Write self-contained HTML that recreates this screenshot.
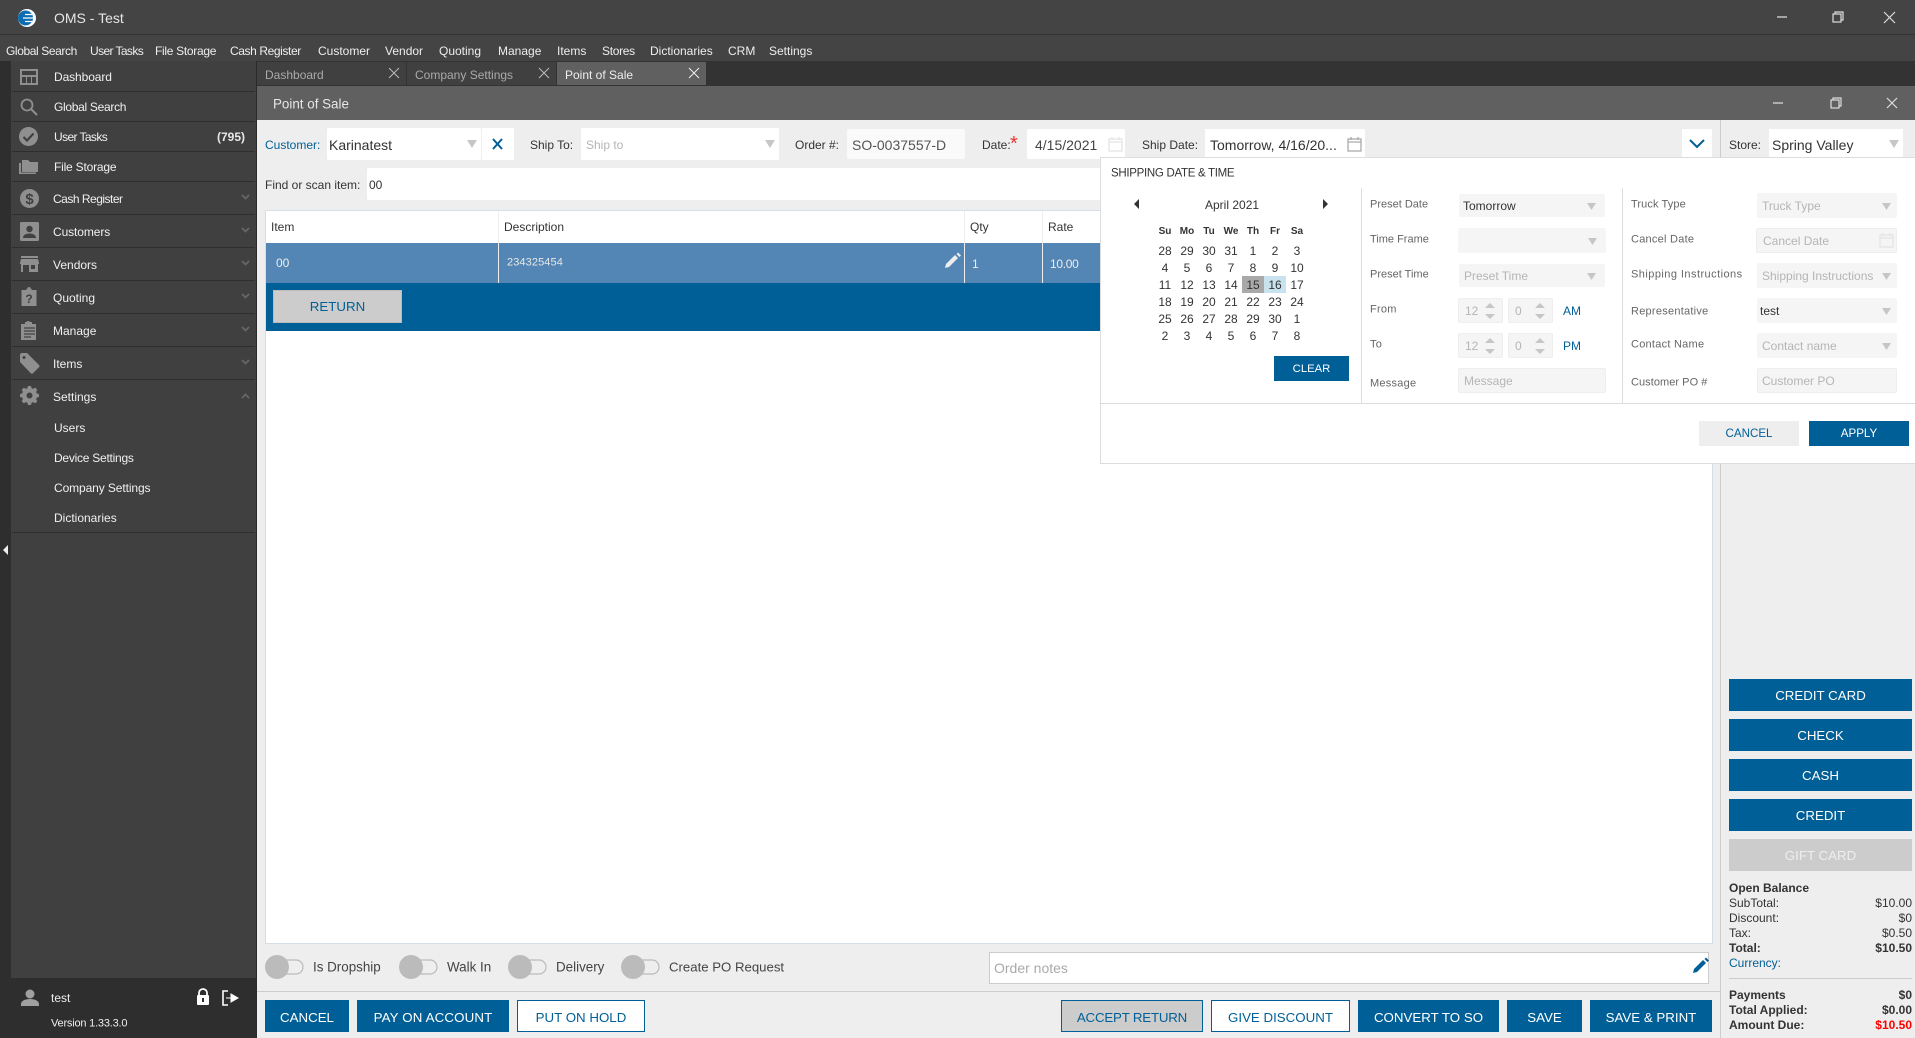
<!DOCTYPE html>
<html lang="en"><head><meta charset="utf-8"><title>OMS - Test</title>
<style>
html,body{margin:0;padding:0;width:1915px;height:1038px;overflow:hidden;background:#eee;font-family:"Liberation Sans",sans-serif}
.b{position:absolute;box-sizing:border-box}
.t{position:absolute;transform:translateY(-50%);white-space:nowrap;line-height:1}
.m{font-size:12px;color:#eee;top:51px}
.s{font-size:12px;color:#f0f0f0;left:54px}
.sx{font-size:12px;color:#f0f0f0;left:53px}
.l{font-size:12px;color:#333}
.g{font-size:11px;color:#666;letter-spacing:.25px}
.f{background:#f5f5f5;border-radius:2px}
.ph{font-size:12px;color:#b5b5b5}
.btn{position:absolute;box-sizing:border-box;display:flex;align-items:center;justify-content:center;font-size:13.3px;color:#fff;background:#005f96;white-space:nowrap}
.low{padding-top:2px}
.alt{background:#fff;color:#005f96;border:1px solid #005f96}
.d{position:absolute;width:22px;height:17px;line-height:19px;text-align:center;font-size:12px;color:#333}
.h{font-weight:bold;font-size:10px;color:#333;line-height:17px}
.r{position:absolute;left:1729px;width:183px;transform:translateY(-50%);font-size:12px;color:#333;display:flex;justify-content:space-between;line-height:1}
.sep{position:absolute;left:12px;width:243px;height:1px;background:#2e2e2e}
</style></head><body>

<!-- app chrome -->
<div class="b" style="left:0;top:0;width:1915px;height:34px;background:#444"></div>
<div class="b" style="left:0;top:34px;width:1915px;height:1px;background:#333"></div>
<div class="b" style="left:0;top:35px;width:1915px;height:26px;background:#444"></div>
<div class="b" style="left:0;top:61px;width:1915px;height:25px;background:#333"></div>
<span class="t" style="left:54px;top:18px;font-size:14px;color:#e6e6e6">OMS - Test</span>
<span class="t m" style="left:6px;letter-spacing:-.4px">Global Search</span>
<span class="t m" style="left:90px;letter-spacing:-.6px">User Tasks</span>
<span class="t m" style="left:155px;letter-spacing:-.3px">File Storage</span>
<span class="t m" style="left:230px;letter-spacing:-.4px">Cash Register</span>
<span class="t m" style="left:318px">Customer</span>
<span class="t m" style="left:385px">Vendor</span>
<span class="t m" style="left:439px">Quoting</span>
<span class="t m" style="left:498px">Manage</span>
<span class="t m" style="left:557px">Items</span>
<span class="t m" style="left:602px;letter-spacing:-.3px">Stores</span>
<span class="t m" style="left:650px">Dictionaries</span>
<span class="t m" style="left:728px">CRM</span>
<span class="t m" style="left:769px">Settings</span>

<!-- sidebar -->
<div class="b" style="left:0;top:61px;width:11px;height:977px;background:#2e2e2e"></div>
<div class="b" style="left:11px;top:61px;width:246px;height:917px;background:#404040"></div>
<div class="b" style="left:0;top:978px;width:257px;height:60px;background:#2e2e2e"></div>
<div class="b" style="left:256px;top:61px;width:1px;height:977px;background:#2a2a2a"></div>
<div class="sep" style="top:91px"></div><div class="sep" style="top:121px"></div><div class="sep" style="top:151px"></div><div class="sep" style="top:181px"></div><div class="sep" style="top:214px"></div><div class="sep" style="top:247px"></div><div class="sep" style="top:280px"></div><div class="sep" style="top:313px"></div><div class="sep" style="top:346px"></div><div class="sep" style="top:379px"></div><div class="sep" style="top:532px"></div>
<span class="t s" style="top:77px;letter-spacing:-.1px">Dashboard</span>
<span class="t s" style="top:107px;letter-spacing:-.3px">Global Search</span>
<span class="t s" style="top:137px;letter-spacing:-.6px">User Tasks</span>
<span class="t" style="left:217px;top:137px;font-size:12px;font-weight:bold;color:#e8e8e8">(795)</span>
<span class="t s" style="top:167px;letter-spacing:-.2px">File Storage</span>
<span class="t sx" style="top:199px;letter-spacing:-.5px">Cash Register</span>
<span class="t sx" style="top:232px;letter-spacing:-.1px">Customers</span>
<span class="t sx" style="top:265px">Vendors</span>
<span class="t sx" style="top:298px">Quoting</span>
<span class="t sx" style="top:331px">Manage</span>
<span class="t sx" style="top:364px">Items</span>
<span class="t sx" style="top:397px">Settings</span>
<span class="t s" style="top:428px">Users</span>
<span class="t s" style="top:458px;letter-spacing:-.25px">Device Settings</span>
<span class="t s" style="top:488px;letter-spacing:-.1px">Company Settings</span>
<span class="t s" style="top:518px">Dictionaries</span>
<span class="t" style="left:51px;top:998px;font-size:12px;color:#eee">test</span>
<span class="t" style="left:51px;top:1024px;font-size:11px;color:#eee;letter-spacing:-.2px">Version 1.33.3.0</span>

<!-- tabs -->
<div class="b" style="left:257px;top:62px;width:149px;height:23px;background:#404040"></div>
<div class="b" style="left:407px;top:62px;width:149px;height:23px;background:#404040"></div>
<div class="b" style="left:557px;top:62px;width:149px;height:23px;background:#606060"></div>
<span class="t" style="left:265px;top:75px;font-size:12px;color:#aaa">Dashboard</span>
<span class="t" style="left:415px;top:75px;font-size:12px;color:#aaa">Company Settings</span>
<span class="t" style="left:565px;top:75px;font-size:12px;color:#eee">Point of Sale</span>

<!-- window -->
<div class="b" style="left:257px;top:86px;width:1658px;height:34px;background:#606060"></div>
<span class="t" style="left:273px;top:104px;font-size:13.4px;color:#e8e8e8">Point of Sale</span>
<div class="b" style="left:257px;top:120px;width:1658px;height:918px;background:#eee"></div>

<!-- toolbar -->
<span class="t l" style="left:265px;top:145px;color:#005f96">Customer:</span>
<div class="b" style="left:327px;top:128px;width:154px;height:32px;background:#fff;border-radius:2px"></div>
<span class="t" style="left:329px;top:145px;font-size:14px;color:#333">Karinatest</span>
<div class="b" style="left:482px;top:128px;width:32px;height:32px;background:#fff"></div>
<span class="t l" style="left:530px;top:145px">Ship To:</span>
<div class="b" style="left:581px;top:128px;width:198px;height:32px;background:#fff;border-radius:2px"></div>
<span class="t ph" style="left:586px;top:145px">Ship to</span>
<span class="t l" style="left:795px;top:145px">Order #:</span>
<div class="b" style="left:847px;top:129px;width:118px;height:30px;background:#fafafa;border-radius:2px"></div>
<span class="t" style="left:852px;top:145px;font-size:14px;color:#555">SO-0037557-D</span>
<span class="t l" style="left:982px;top:145px">Date:</span>
<span class="t" style="left:1010px;top:144px;font-size:20px;color:#e33">*</span>
<div class="b" style="left:1027px;top:129px;width:98px;height:30px;background:#fff;border-radius:2px"></div>
<span class="t" style="left:1035px;top:145px;font-size:14px;color:#444">4/15/2021</span>
<span class="t l" style="left:1142px;top:145px">Ship Date:</span>
<div class="b" style="left:1205px;top:129px;width:160px;height:30px;background:#fff"></div>
<span class="t" style="left:1210px;top:145px;font-size:14px;color:#333">Tomorrow, 4/16/20...</span>
<div class="b" style="left:1682px;top:129px;width:30px;height:28px;background:#fff"></div>
<div class="b" style="left:1720px;top:120px;width:1px;height:918px;background:#ccc"></div>
<span class="t l" style="left:1729px;top:145px">Store:</span>
<div class="b" style="left:1769px;top:129px;width:134px;height:28px;background:#fff"></div>
<span class="t" style="left:1772px;top:145px;font-size:14px;color:#333">Spring Valley</span>

<span class="t l" style="left:265px;top:185px">Find or scan item:</span>
<div class="b" style="left:367px;top:168px;width:1345px;height:32px;background:#fff;border-radius:2px 0 0 2px"></div>
<span class="t" style="left:369px;top:185px;font-size:12px;color:#333">00</span>

<!-- table -->
<div class="b" style="left:265px;top:210px;width:1448px;height:734px;background:#fff;border:1px solid #d5dfe9"></div>
<span class="t l" style="left:271px;top:227px">Item</span>
<span class="t l" style="left:504px;top:227px">Description</span>
<span class="t l" style="left:970px;top:227px">Qty</span>
<span class="t l" style="left:1048px;top:227px">Rate</span>
<div class="b" style="left:266px;top:243px;width:1446px;height:40px;background:#5486b5"></div>
<div class="b" style="left:498px;top:211px;width:1px;height:72px;background:#eee"></div>
<div class="b" style="left:964px;top:211px;width:1px;height:72px;background:#eee"></div>
<div class="b" style="left:1042px;top:211px;width:1px;height:72px;background:#eee"></div>
<span class="t" style="left:276px;top:263px;font-size:12px;color:#eee">00</span>
<span class="t" style="left:507px;top:263px;font-size:11px;color:#e6e6e6;letter-spacing:.1px">234325454</span>
<span class="t" style="left:972px;top:264px;font-size:12px;color:#eee">1</span>
<span class="t" style="left:1050px;top:264px;font-size:12px;color:#eee;letter-spacing:-.3px">10.00</span>
<div class="b" style="left:266px;top:283px;width:1446px;height:48px;background:#005f96"></div>
<div class="btn" style="left:273px;top:290px;width:129px;height:33px;background:#ccc;color:#005f96;border:1px solid #bbb">RETURN</div>

<!-- popup -->
<div class="b" style="left:1100px;top:157px;width:815px;height:307px;background:#fff;border:1px solid #ddd;border-right:0"></div>
<div class="b" style="left:1101px;top:403px;width:814px;height:1px;background:#ddd"></div>
<div class="b" style="left:1361px;top:188px;width:1px;height:215px;background:#ddd"></div>
<div class="b" style="left:1622px;top:188px;width:1px;height:215px;background:#ddd"></div>
<span class="t" style="left:1111px;top:174px;font-size:11.5px;color:#333;letter-spacing:-.3px">SHIPPING DATE &amp; TIME</span>
<span class="t" style="left:1205px;top:205px;font-size:12px;color:#333">April 2021</span>

<div class="d h" style="left:1154px;top:223px">Su</div><div class="d h" style="left:1176px;top:223px">Mo</div><div class="d h" style="left:1198px;top:223px">Tu</div><div class="d h" style="left:1220px;top:223px">We</div><div class="d h" style="left:1242px;top:223px">Th</div><div class="d h" style="left:1264px;top:223px">Fr</div><div class="d h" style="left:1286px;top:223px">Sa</div>

<div class="d" style="left:1154px;top:242px">28</div><div class="d" style="left:1176px;top:242px">29</div><div class="d" style="left:1198px;top:242px">30</div><div class="d" style="left:1220px;top:242px">31</div><div class="d" style="left:1242px;top:242px">1</div><div class="d" style="left:1264px;top:242px">2</div><div class="d" style="left:1286px;top:242px">3</div>
<div class="d" style="left:1154px;top:259px">4</div><div class="d" style="left:1176px;top:259px">5</div><div class="d" style="left:1198px;top:259px">6</div><div class="d" style="left:1220px;top:259px">7</div><div class="d" style="left:1242px;top:259px">8</div><div class="d" style="left:1264px;top:259px">9</div><div class="d" style="left:1286px;top:259px">10</div>
<div class="d" style="left:1154px;top:276px">11</div><div class="d" style="left:1176px;top:276px">12</div><div class="d" style="left:1198px;top:276px">13</div><div class="d" style="left:1220px;top:276px">14</div><div class="d" style="left:1242px;top:276px;background:#a9a9a9">15</div><div class="d" style="left:1264px;top:276px;background:#c8e3ee">16</div><div class="d" style="left:1286px;top:276px">17</div>
<div class="d" style="left:1154px;top:293px">18</div><div class="d" style="left:1176px;top:293px">19</div><div class="d" style="left:1198px;top:293px">20</div><div class="d" style="left:1220px;top:293px">21</div><div class="d" style="left:1242px;top:293px">22</div><div class="d" style="left:1264px;top:293px">23</div><div class="d" style="left:1286px;top:293px">24</div>
<div class="d" style="left:1154px;top:310px">25</div><div class="d" style="left:1176px;top:310px">26</div><div class="d" style="left:1198px;top:310px">27</div><div class="d" style="left:1220px;top:310px">28</div><div class="d" style="left:1242px;top:310px">29</div><div class="d" style="left:1264px;top:310px">30</div><div class="d" style="left:1286px;top:310px">1</div>
<div class="d" style="left:1154px;top:327px">2</div><div class="d" style="left:1176px;top:327px">3</div><div class="d" style="left:1198px;top:327px">4</div><div class="d" style="left:1220px;top:327px">5</div><div class="d" style="left:1242px;top:327px">6</div><div class="d" style="left:1264px;top:327px">7</div><div class="d" style="left:1286px;top:327px">8</div>
<div class="btn" style="left:1274px;top:356px;width:75px;height:25px;font-size:11.3px">CLEAR</div>

<span class="t g" style="left:1370px;top:205px;letter-spacing:0">Preset Date</span>
<span class="t g" style="left:1370px;top:240px;letter-spacing:0">Time Frame</span>
<span class="t g" style="left:1370px;top:275px;letter-spacing:0">Preset Time</span>
<span class="t g" style="left:1370px;top:310px">From</span>
<span class="t g" style="left:1370px;top:345px">To</span>
<span class="t g" style="left:1370px;top:384px">Message</span>
<div class="b f" style="left:1459px;top:194px;width:146px;height:23px"></div>
<span class="t" style="left:1463px;top:206px;font-size:12px;color:#333">Tomorrow</span>
<div class="b f" style="left:1458px;top:228px;width:148px;height:25px"></div>
<div class="b f" style="left:1459px;top:264px;width:146px;height:23px"></div>
<span class="t ph" style="left:1464px;top:276px">Preset Time</span>
<div class="b f" style="left:1458px;top:298px;width:45px;height:25px;border:1px solid #eee"></div>
<div class="b f" style="left:1508px;top:298px;width:45px;height:25px;border:1px solid #eee"></div>
<div class="b f" style="left:1458px;top:333px;width:45px;height:25px;border:1px solid #eee"></div>
<div class="b f" style="left:1508px;top:333px;width:45px;height:25px;border:1px solid #eee"></div>
<span class="t ph" style="left:1465px;top:311px">12</span><span class="t ph" style="left:1515px;top:311px">0</span>
<span class="t ph" style="left:1465px;top:346px">12</span><span class="t ph" style="left:1515px;top:346px">0</span>
<span class="t" style="left:1563px;top:311px;font-size:12px;color:#005f96">AM</span>
<span class="t" style="left:1563px;top:346px;font-size:12px;color:#005f96">PM</span>
<div class="b f" style="left:1458px;top:368px;width:148px;height:25px;border:1px solid #eee"></div>
<span class="t ph" style="left:1464px;top:381px">Message</span>

<span class="t g" style="left:1631px;top:205px;letter-spacing:.1px">Truck Type</span>
<span class="t g" style="left:1631px;top:240px">Cancel Date</span>
<span class="t g" style="left:1631px;top:275px;letter-spacing:.45px">Shipping Instructions</span>
<span class="t g" style="left:1631px;top:312px">Representative</span>
<span class="t g" style="left:1631px;top:345px">Contact Name</span>
<span class="t g" style="left:1631px;top:383px;letter-spacing:.05px">Customer PO #</span>
<div class="b f" style="left:1757px;top:193px;width:140px;height:25px"></div>
<span class="t ph" style="left:1762px;top:206px">Truck Type</span>
<div class="b f" style="left:1756px;top:228px;width:141px;height:25px;border:1px solid #eee"></div>
<span class="t ph" style="left:1763px;top:241px">Cancel Date</span>
<div class="b f" style="left:1757px;top:263px;width:140px;height:25px"></div>
<span class="t ph" style="left:1762px;top:276px">Shipping Instructions</span>
<div class="b f" style="left:1757px;top:298px;width:140px;height:25px"></div>
<span class="t" style="left:1760px;top:311px;font-size:12px;color:#333">test</span>
<div class="b f" style="left:1757px;top:333px;width:140px;height:25px"></div>
<span class="t ph" style="left:1762px;top:346px">Contact name</span>
<div class="b f" style="left:1757px;top:368px;width:140px;height:25px;border:1px solid #eee"></div>
<span class="t ph" style="left:1762px;top:381px">Customer PO</span>
<div class="btn" style="left:1699px;top:421px;width:100px;height:25px;background:#eee;color:#005f96;font-size:11.6px">CANCEL</div>
<div class="btn" style="left:1809px;top:421px;width:100px;height:25px;font-size:11.6px">APPLY</div>

<!-- right panel -->
<div class="btn" style="left:1729px;top:679px;width:183px;height:32px">CREDIT CARD</div>
<div class="btn" style="left:1729px;top:719px;width:183px;height:32px">CHECK</div>
<div class="btn" style="left:1729px;top:759px;width:183px;height:32px">CASH</div>
<div class="btn" style="left:1729px;top:799px;width:183px;height:32px">CREDIT</div>
<div class="btn" style="left:1729px;top:839px;width:183px;height:32px;background:#ccc;color:#eee">GIFT CARD</div>
<div class="r" style="top:888px;font-weight:bold"><span>Open Balance</span></div>
<div class="r" style="top:903px"><span>SubTotal:</span><span>$10.00</span></div>
<div class="r" style="top:918px"><span>Discount:</span><span>$0</span></div>
<div class="r" style="top:933px"><span>Tax:</span><span>$0.50</span></div>
<div class="r" style="top:948px;font-weight:bold"><span>Total:</span><span>$10.50</span></div>
<div class="r" style="top:963px;color:#005f96"><span>Currency:</span></div>
<div class="b" style="left:1729px;top:978px;width:183px;height:1px;background:#ccc"></div>
<div class="r" style="top:995px;font-weight:bold"><span>Payments</span><span>$0</span></div>
<div class="r" style="top:1010px;font-weight:bold"><span>Total Applied:</span><span>$0.00</span></div>
<div class="r" style="top:1025px;font-weight:bold"><span>Amount Due:</span><span style="color:#f00">$10.50</span></div>

<!-- bottom -->
<span class="t" style="left:313px;top:967px;font-size:13.4px;color:#444">Is Dropship</span>
<span class="t" style="left:447px;top:967px;font-size:13.4px;color:#444">Walk In</span>
<span class="t" style="left:556px;top:967px;font-size:13.4px;color:#444">Delivery</span>
<span class="t" style="left:669px;top:967px;font-size:13.2px;color:#444">Create PO Request</span>
<div class="b" style="left:989px;top:952px;width:720px;height:32px;background:#fff;border:1px solid #ccc"></div>
<span class="t" style="left:994px;top:968px;font-size:14px;color:#aaa">Order notes</span>
<div class="b" style="left:257px;top:991px;width:1463px;height:1px;background:#ccc"></div>
<div class="btn low" style="left:265px;top:1000px;width:84px;height:32px">CANCEL</div>
<div class="btn low" style="left:357px;top:1000px;width:152px;height:32px;letter-spacing:.15px">PAY ON ACCOUNT</div>
<div class="btn alt low" style="left:517px;top:1000px;width:128px;height:32px">PUT ON HOLD</div>
<div class="btn low" style="left:1061px;top:1000px;width:142px;height:32px;background:#ccc;color:#005f96;border:1px solid #005f96;letter-spacing:-.2px">ACCEPT RETURN</div>
<div class="btn alt low" style="left:1211px;top:1000px;width:139px;height:32px">GIVE DISCOUNT</div>
<div class="btn low" style="left:1358px;top:1000px;width:141px;height:32px">CONVERT TO SO</div>
<div class="btn low" style="left:1507px;top:1000px;width:75px;height:32px">SAVE</div>
<div class="btn low" style="left:1590px;top:1000px;width:122px;height:32px">SAVE &amp; PRINT</div>

<!-- all icons -->
<svg class="b" style="left:0;top:0" width="1915" height="1038" viewBox="0 0 1915 1038" fill="none">
<!-- logo -->
<circle cx="27" cy="18" r="9" fill="#fff"/><circle cx="25.500" cy="18" r="7.500" fill="#0b6cb3"/><path d="M25 14.500h7M23 18h10M25 21.500h7" stroke="#fff" stroke-width="1.300"/>
<!-- window ctrls -->
<g stroke="#ddd" stroke-width="1.2"><path d="M1777 17h10M1884 12l11 11M1895 12l-11 11"/><rect x="1833" y="14" width="8" height="8"/><path d="M1835 14v-2h8v8h-2"/></g>
<g stroke="#ddd" stroke-width="1.2"><path d="M1773 103h10M1887 98l10 10M1897 98l-10 10"/><rect x="1831" y="100" width="8" height="8"/><path d="M1833 100v-2h8v8h-2"/></g>
<!-- tab close -->
<g stroke="#bbb" stroke-width="1"><path d="M389 68l10 10M399 68l-10 10M539 68l10 10M549 68l-10 10"/></g>
<g stroke="#eee" stroke-width="1"><path d="M689 68l10 10M699 68l-10 10"/></g>
<!-- sidebar icons -->
<g fill="#8f8f8f" stroke="none">
<path fill-rule="evenodd" d="M20 69h18v16H20zM22 71v4h14v-4zM22 77v6h4v-6zM27 77v6h4v-6zM32 77v6h4v-6z"/>
<circle cx="28.500" cy="136.500" r="9.500"/>
<path d="M22 160h6l2 2h8v10H22z"/>
<path d="M19 163h2v9.500h15v1.500H19z"/>
<circle cx="29.500" cy="198.500" r="9.500"/>
<rect x="20" y="222" width="19" height="19" rx="1.500"/>
<path d="M21 256h17v2H21zM21 259h17l1 4v1h-1v8h-9v-7h-6v7h-2v-8h-1v-1zM31 265h4v4h-4z" fill-rule="evenodd"/>
<path d="M21.500 290h5v-1.500h1a1.500 1.500 0 0 1 3 0h1v1.500h5v16h-15z"/>
<path d="M22 324h4v-2h1.500a2 2 0 0 1 3.500 0H33v2h4v16H22z" transform="translate(-1 0)"/>
<path fill-rule="evenodd" d="M20 355c0-1 1-2 2-2h5l12 12c.7.7.7 1.500 0 2.200l-6 6c-.7.7-1.500.7-2.200 0L20 362zM24 356a1.500 1.500 0 1 0 0 3 1.500 1.500 0 0 0 0-3z"/>
<path transform="translate(29.500 395.500) scale(.86) translate(-29.500 -397)" fill-rule="evenodd" d="M27.700 386h3.600l.6 2.500 1.900.8 2.200-1.400 2.600 2.600-1.400 2.200.8 1.900 2.500.6v3.600l-2.500.6-.8 1.900 1.400 2.200-2.600 2.600-2.200-1.400-1.900.8-.6 2.500h-3.600l-.6-2.500-1.900-.8-2.200 1.400-2.600-2.600 1.400-2.200-.8-1.900-2.500-.6v-3.600l2.500-.6.8-1.900-1.400-2.200 2.600-2.600 2.200 1.400 1.900-.8zM29.500 393.500a3.500 3.500 0 1 0 0 7 3.500 3.500 0 0 0 0-7z"/>
</g>
<circle cx="27" cy="105" r="5.500" stroke="#8f8f8f" stroke-width="1.800"/><path d="M31 109l6 6" stroke="#8f8f8f" stroke-width="2"/>
<path d="M23.500 137l3.500 3.500 6.500-7" stroke="#404040" stroke-width="2.200"/>
<text x="29.500" y="204" font-family="Liberation Sans" font-size="15" font-weight="bold" text-anchor="middle" fill="#404040">$</text>
<circle cx="29.500" cy="229" r="3.200" fill="#404040"/><path d="M23 238c0-3 3-4.500 6.500-4.500s6.500 1.500 6.500 4.500z" fill="#404040"/>
<text x="29" y="303" font-family="Liberation Sans" font-size="12" font-weight="bold" text-anchor="middle" fill="#404040">?</text>
<path d="M24 328h11M24 331h11M24 334h11M24 337h7" stroke="#404040" stroke-width="1.300"/>
<!-- sidebar chevrons -->
<g stroke="#666" stroke-width="1.800"><path d="M242 195l3.500 3.500 3.500-3.500"/><path d="M242 228l3.500 3.500 3.500-3.500"/><path d="M242 261l3.500 3.500 3.500-3.500"/><path d="M242 294l3.500 3.500 3.500-3.500"/><path d="M242 327l3.500 3.500 3.500-3.500"/><path d="M242 360l3.500 3.500 3.500-3.500"/><path d="M242 398l3.500-3.500 3.500 3.500"/></g>
<path d="M8 545v10l-5-5z" fill="#eee"/>
<!-- footer -->
<circle cx="30" cy="994" r="4.500" fill="#a0a0a0"/><path d="M21 1006v-2c0-3 4-5 9-5s9 2 9 5v2z" fill="#a0a0a0"/>
<path d="M199 996v-3a4 4 0 0 1 8 0v3" stroke="#fff" stroke-width="1.800"/><rect x="197" y="995" width="12" height="10" rx="1" fill="#fff"/><rect x="202" y="998" width="2" height="4" fill="#2e2e2e"/>
<path d="M228 991h-5v14h5" stroke="#fff" stroke-width="1.600"/><path d="M226 998h5v-4l7 4-7 4v-4" fill="#fff" stroke="#fff"/>
<!-- toolbar -->
<g fill="#c6c6c6">
<path d="M467 140h10l-5 8zM765 140h10l-5 8zM1889 140h10l-5 8z"/>
<path d="M1587 203h9l-4.500 7zM1588 238h9l-4.500 7zM1587 273h9l-4.500 7zM1882 203h9l-4.500 7zM1882 273h9l-4.500 7zM1882 308h9l-4.500 7zM1882 343h9l-4.500 7z"/>
<path d="M1485 308l5-5 5 5zM1485 314h10l-5 5zM1535 308l5-5 5 5zM1535 314h10l-5 5zM1485 343l5-5 5 5zM1485 349h10l-5 5zM1535 343l5-5 5 5zM1535 349h10l-5 5z"/>
</g>
<path d="M493 139l9 10M502 139l-9 10" stroke="#005f96" stroke-width="2"/>
<path d="M1690 140l7 7 7-7" stroke="#005f96" stroke-width="2"/>
<g stroke="#e4e4e4" stroke-width="1.300"><rect x="1109" y="139" width="13" height="12"/><path d="M1109 142h13M1112 137v3M1119 137v3"/></g>
<g stroke="#aaa" stroke-width="1.300"><rect x="1348" y="139" width="13" height="12"/><path d="M1348 142h13M1351 137v3M1358 137v3"/></g>
<g stroke="#e4e4e4" stroke-width="1.300"><rect x="1880" y="235" width="13" height="12"/><path d="M1880 238h13M1883 233v3M1890 233v3"/></g>
<!-- calendar arrows -->
<path d="M1139 199v10l-5-5zM1323 199v10l5-5z" fill="#333"/>
<!-- pencils -->
<path d="M945 268l1-4 9-9 3 3-9 9zM956.500 254l1.500-1.500 3 3-1.500 1.500z" fill="#eee"/>
<path d="M1693 973l1-4 9-9 3 3-9 9zM1704.500 959l1.500-1.500 3 3-1.500 1.500z" fill="#005f96"/>
<!-- toggles -->
<g stroke="#bbb" stroke-width="1.200" fill="none"><rect x="277" y="960" width="26" height="14" rx="7"/><rect x="411" y="960" width="26" height="14" rx="7"/><rect x="520" y="960" width="26" height="14" rx="7"/><rect x="633" y="960" width="26" height="14" rx="7"/></g>
<g fill="#bbb"><circle cx="277" cy="967" r="12"/><circle cx="411" cy="967" r="12"/><circle cx="520" cy="967" r="12"/><circle cx="633" cy="967" r="12"/></g>
</svg>
</body></html>
